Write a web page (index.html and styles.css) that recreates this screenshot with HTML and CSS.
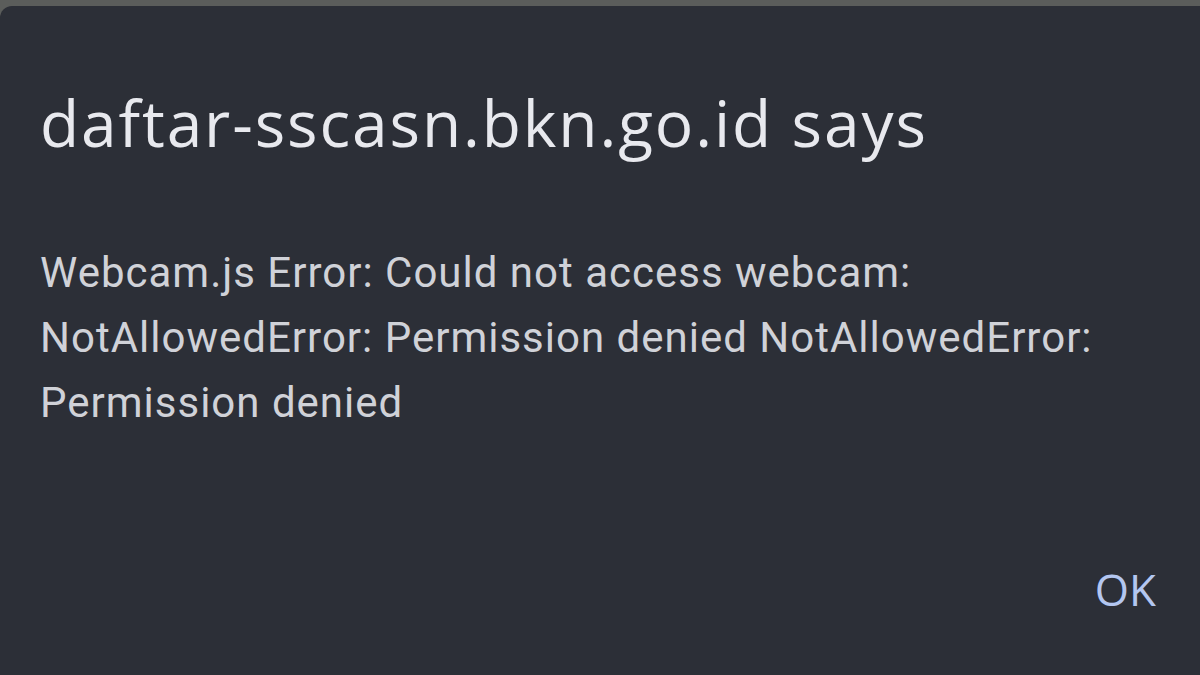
FILE: index.html
```html
<!DOCTYPE html>
<html>
<head>
<meta charset="utf-8">
<link rel="stylesheet" href="styles.css">
</head>
<body>
<div class="dialog">
  <h1 class="title">daftar-sscasn.bkn.go.id says</h1>
  <p class="message">Webcam.js Error: Could not access webcam:<br>NotAllowedError: Permission denied NotAllowedError:<br>Permission denied</p>
  <div class="actions"><span class="ok">OK</span></div>
</div>
</body>
</html>
```
FILE: styles.css
```css
html, body {
  margin: 0;
  padding: 0;
  width: 1200px;
  height: 675px;
  overflow: hidden;
  background: #5b5d5b;
}
body {
  padding-top: 6px;
  box-sizing: border-box;
}
.dialog {
  height: 669px;
  background: #2c2f37;
  border-radius: 12px 0 0 0;
  padding: 0 44px 0 40px;
  box-sizing: border-box;
  display: flex;
  flex-direction: column;
}
.title {
  margin: 77px 0 0 0;
  font-family: "Open Sans", sans-serif;
  font-weight: 400;
  font-size: 64px;
  line-height: 80px;
  letter-spacing: 1.9px;
  color: #e8e9ee;
  white-space: nowrap;
}
.message {
  margin: 77px 0 0 0;
  font-family: Roboto, sans-serif;
  font-size: 42px;
  line-height: 65px;
  letter-spacing: 1px;
  color: #d0d2d8;
  white-space: nowrap;
}
.actions {
  margin-top: auto;
  margin-bottom: 61px;
  display: flex;
  justify-content: flex-end;
}
.ok {
  font-family: "Open Sans", sans-serif;
  font-size: 44px;
  line-height: 50px;
  color: #b3c6f0;
}
```
